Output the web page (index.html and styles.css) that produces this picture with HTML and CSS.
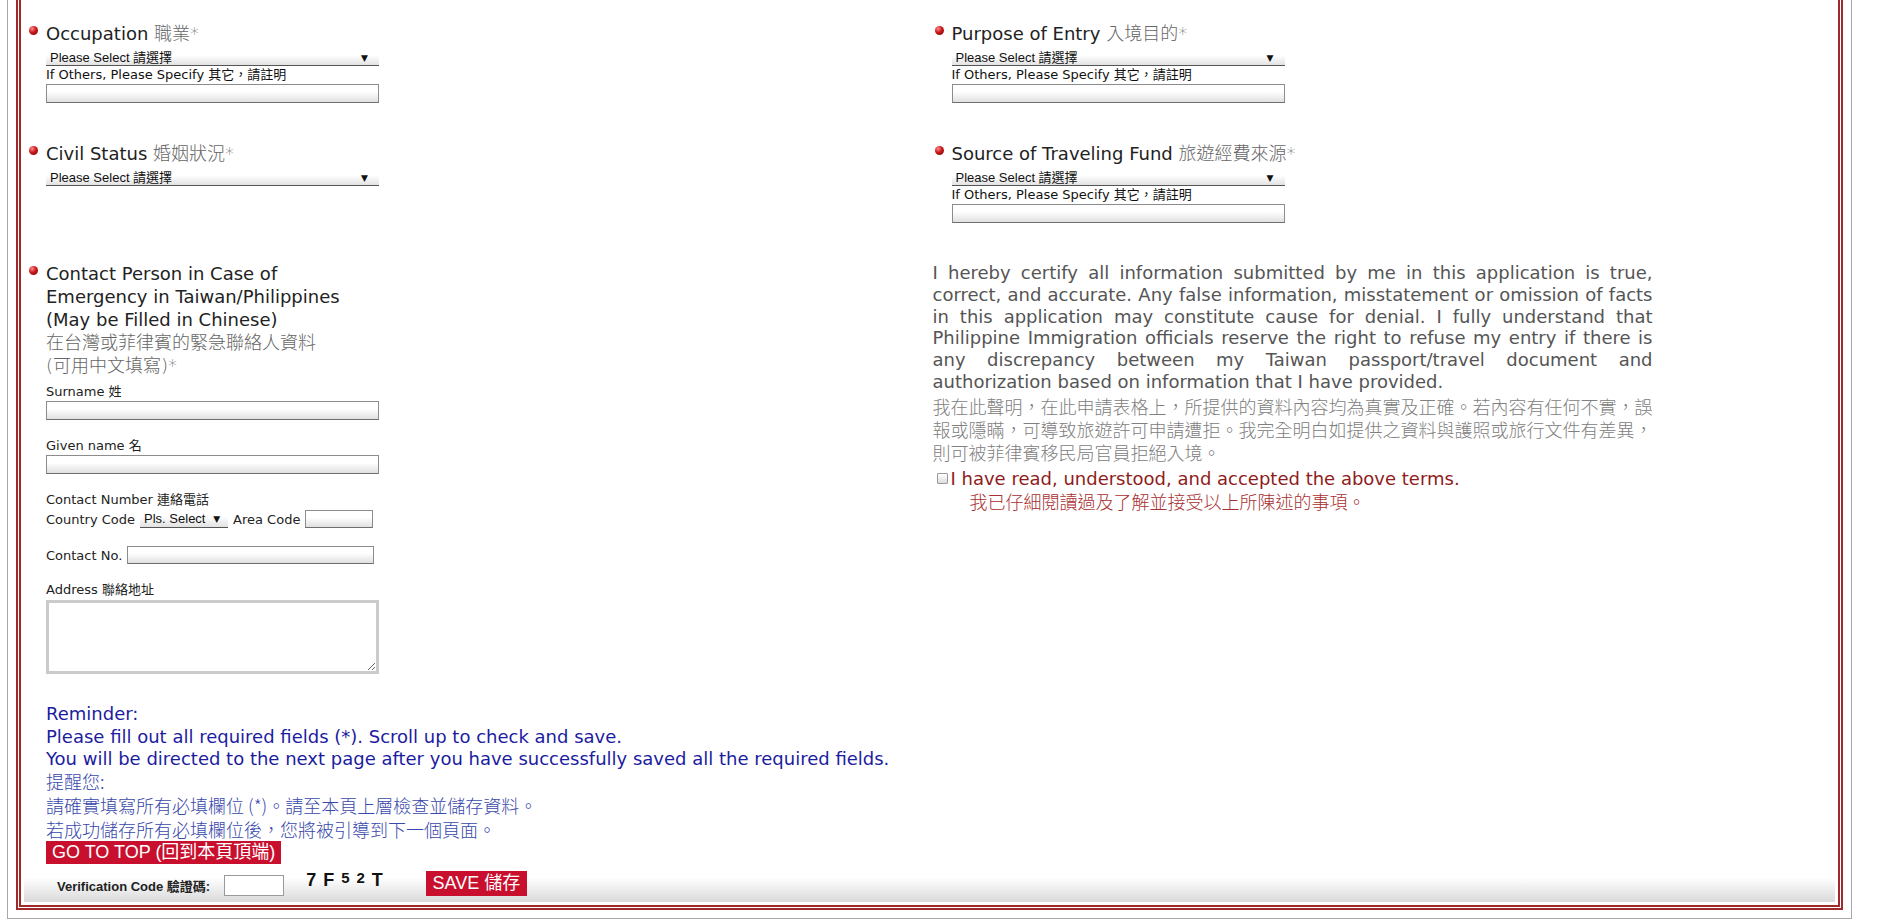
FILE: index.html
```html
<!DOCTYPE html>
<html lang="zh-Hant">
<head>
    <meta charset="UTF-8">
    <meta name="viewport" content="width=device-width, initial-scale=1.0">
    <title>Application Form</title>
    <link rel="stylesheet" href="styles.css">
</head>
<body>
<div class="page">
  <div class="frame">

    <div class="row">
      <div class="cell">
        <span class="dot"></span>
        <div class="field">
          <div class="label">Occupation <span class="zh">職業*</span></div>
          <div class="pick"><select><option>Please Select 請選擇</option></select></div>
          <div class="hint">If Others, Please Specify 其它，請註明</div>
          <input type="text" class="box">
        </div>
      </div>
      <div class="cell">
        <span class="dot"></span>
        <div class="field">
          <div class="label">Purpose of Entry <span class="zh">入境目的*</span></div>
          <div class="pick"><select><option>Please Select 請選擇</option></select></div>
          <div class="hint">If Others, Please Specify 其它，請註明</div>
          <input type="text" class="box">
        </div>
      </div>
    </div>

    <div class="row">
      <div class="cell">
        <span class="dot"></span>
        <div class="field">
          <div class="label">Civil Status <span class="zh">婚姻狀況*</span></div>
          <div class="pick"><select><option>Please Select 請選擇</option></select></div>
        </div>
      </div>
      <div class="cell">
        <span class="dot"></span>
        <div class="field">
          <div class="label">Source of Traveling Fund <span class="zh">旅遊經費來源*</span></div>
          <div class="pick"><select><option>Please Select 請選擇</option></select></div>
          <div class="hint">If Others, Please Specify 其它，請註明</div>
          <input type="text" class="box">
        </div>
      </div>
    </div>

    <div class="row row-last">
      <div class="cell">
        <span class="dot"></span>
        <div class="field">
          <div class="label wrap">Contact Person in Case of Emergency in Taiwan/Philippines (May be Filled in Chinese)<br><span class="zh">在台灣或菲律賓的緊急聯絡人資料<br>(可用中文填寫)*</span></div>

          <div class="group first">
            <div class="sub">Surname 姓</div>
            <input type="text" class="box">
          </div>
          <div class="group">
            <div class="sub">Given name 名</div>
            <input type="text" class="box">
          </div>
          <div class="group">
            <div class="sub">Contact Number 連絡電話</div>
            <div class="line">
              Country Code
              <div class="pick small"><select><option>Pls. Select</option></select></div>
              Area Code
              <input type="text" class="box area">
            </div>
          </div>
          <div class="group">
            <div class="line">
              Contact No.
              <input type="text" class="box phone">
            </div>
          </div>
          <div class="group">
            <div class="sub">Address 聯絡地址</div>
            <textarea class="addr"></textarea>
          </div>
        </div>
      </div>

      <div class="cell terms">
        <p class="certify">I hereby certify all information submitted by me in this application is true, correct, and accurate. Any false information, misstatement or omission of facts in this application may constitute cause for denial. I fully understand that Philippine Immigration officials reserve the right to refuse my entry if there is any discrepancy between my Taiwan passport/travel document and authorization based on information that I have provided.</p>
        <p class="certify-zh">我在此聲明，在此申請表格上，所提供的資料內容均為真實及正確。若內容有任何不實，誤報或隱瞞，可導致旅遊許可申請遭拒。我完全明白如提供之資料與護照或旅行文件有差異，則可被菲律賓移民局官員拒絕入境。</p>
        <label class="agree"><input type="checkbox" class="tick">I have read, understood, and accepted the above terms.</label>
        <div class="agree-zh">我已仔細閱讀過及了解並接受以上所陳述的事項。</div>
      </div>
    </div>

    <div class="reminder">
      <p class="note">Reminder:<br>Please fill out all required fields (*). Scroll up to check and save.<br>You will be directed to the next page after you have successfully saved all the required fields.</p>
      <p class="note-zh">提醒您:<br>請確實填寫所有必填欄位 (*)。請至本頁上層檢查並儲存資料。<br>若成功儲存所有必填欄位後，您將被引導到下一個頁面。</p>
      <button type="button" class="red-btn top-btn">GO TO TOP (回到本頁頂端)</button>
    </div>

    <div class="bar">
      <span class="vlabel">Verification Code 驗證碼:</span>
      <input type="text" class="vcode">
      <span class="captcha">7F<span class="up">52</span>T</span>
      <button type="button" class="red-btn save-btn">SAVE 儲存</button>
    </div>

  </div>
</div>
</body>
</html>
```

FILE: styles.css
```css
body {
    margin: 0;
    background: #fff;
    font-family: "DejaVu Sans", "Noto Sans CJK TC", sans-serif;
    color: #222;
}
.page {
    width: 1845px;
    margin-left: 7px;
    box-sizing: border-box;
    border: 1px solid #a8a8a8;
    border-top: none;
    padding: 0 8px 8px 8px;
}
.frame {
    border: 5px double #9e2a2b;
    border-top: none;
    padding: 22px 3px 3px 3px;
}
.row {
    display: grid;
    grid-template-columns: 1fr 1fr;
    padding-bottom: 39px;
}
.row-last {
    padding-bottom: 0;
}
.cell {
    display: flex;
    align-items: flex-start;
    gap: 8px;
    padding-left: 5px;
}
.dot {
    width: 9px;
    height: 9px;
    margin-top: 4px;
    border-radius: 50%;
    flex: none;
    background: radial-gradient(circle at 35% 30%, #ff8a8a, #c81818 45%, #7a0000 100%);
}
.label {
    font-size: 18px;
    line-height: 23px;
    color: #222;
    white-space: nowrap;
}
.label.wrap {
    width: 333px;
    white-space: normal;
}
.zh {
    color: #666;
    font-weight: 300;
}
.pick {
    position: relative;
    width: 333px;
    margin-top: 5px;
}
.pick select {
    appearance: none;
    -webkit-appearance: none;
    display: block;
    width: 100%;
    height: 16px;
    margin: 0;
    padding: 0 0 0 4px;
    border: 0;
    border-bottom: 1px solid #555;
    border-radius: 0;
    background: linear-gradient(#fff, #fff 35%, #e2e2e2);
    font: 13px "Liberation Sans", "Noto Sans CJK TC", sans-serif;
    color: #111;
}
.pick::after {
    content: "\25BC";
    position: absolute;
    right: 11px;
    top: 3px;
    font-size: 9px;
    color: #111;
    pointer-events: none;
}
.hint {
    font-size: 13px;
    line-height: 17px;
    color: #111;
}
.box {
    display: block;
    box-sizing: border-box;
    width: 333px;
    height: 19px;
    margin: 1px 0 0 0;
    border: 1px solid #8c8c8c;
    border-bottom-color: #6e6e6e;
    background: linear-gradient(#fff, #fff 40%, #e0e0e0);
    padding: 0 3px;
}
.group {
    margin-top: 18px;
}
.group.first {
    margin-top: 7px;
}
.sub {
    font-size: 13px;
    line-height: 16px;
    color: #222;
}
.line {
    display: flex;
    align-items: center;
    gap: 5px;
    height: 18px;
    margin-top: 2px;
    font-size: 13px;
    color: #222;
    white-space: nowrap;
}
.pick.small {
    width: 88px;
    margin-top: 0;
}
.pick.small select {
    height: 18px;
}
.pick.small::after {
    right: 8px;
    top: 4px;
}
.box.area {
    width: 68px;
    height: 18px;
    margin: 0;
}
.box.phone {
    width: 247px;
    height: 18px;
    margin: 0;
}
.addr {
    display: block;
    box-sizing: border-box;
    width: 333px;
    height: 74px;
    margin-top: 2px;
    border: 3px solid #cbcbcb;
    background: #fff;
}
.cell.terms {
    display: block;
    padding-left: 3px;
}
.certify {
    width: 720px;
    margin: 0;
    font-size: 18px;
    line-height: 21.8px;
    text-align: justify;
    color: #555;
}
.certify-zh {
    width: 722px;
    margin: 2px 0 0 0;
    font-family: "Noto Sans CJK TC", sans-serif;
    font-weight: 300;
    font-size: 18px;
    line-height: 23px;
    color: #808080;
}
.agree {
    display: flex;
    align-items: center;
    gap: 3px;
    margin-top: 4px;
    height: 22px;
    font-size: 18px;
    color: #8e1c1c;
}
.tick {
    appearance: none;
    -webkit-appearance: none;
    width: 11px;
    height: 11px;
    margin: 0 0 0 4px;
    border: 1px solid #9a9a9a;
    border-radius: 1px;
    background: linear-gradient(#fff, #ddd);
}
.agree-zh {
    padding-left: 37px;
    font-family: "Noto Sans CJK TC", sans-serif;
    font-weight: 300;
    font-size: 18px;
    line-height: 22px;
    color: #a83030;
}
.reminder {
    margin-top: 29px;
    padding-left: 22px;
}
.note {
    margin: 0;
    font-size: 18px;
    line-height: 22.5px;
    color: #1c1ca0;
}
.note-zh {
    margin: -2px 0 0 0;
    font-family: "Noto Sans CJK TC", sans-serif;
    font-weight: 300;
    font-size: 18px;
    line-height: 24px;
    color: #3848ac;
}
.red-btn {
    border: none;
    border-radius: 0;
    background: #c8102e;
    color: #fff;
    font-family: "Liberation Sans", "Noto Sans CJK TC", sans-serif;
    font-size: 18px;
    cursor: pointer;
}
.top-btn {
    display: block;
    height: 23px;
    line-height: 23px;
    margin-top: 0;
    padding: 0 6px;
}
.bar {
    display: flex;
    align-items: center;
    height: 33px;
    margin-top: 5px;
    padding-left: 33px;
    background: linear-gradient(#fff, #fff 25%, #dadada);
}
.vlabel {
    font-family: "Liberation Sans", "Noto Sans CJK TC", sans-serif;
    font-size: 13px;
    font-weight: bold;
    color: #222;
}
.vcode {
    box-sizing: border-box;
    width: 60px;
    height: 21px;
    margin-left: 14px;
    border: 1px solid #999;
    background: #fff;
}
.captcha {
    align-self: flex-start;
    margin-left: 22px;
    font-family: "Liberation Sans", sans-serif;
    font-weight: bold;
    font-size: 18px;
    letter-spacing: 7px;
    color: #111;
}
.captcha .up {
    font-size: 15px;
    vertical-align: 3px;
}
.save-btn {
    width: 101px;
    height: 25px;
    line-height: 25px;
    margin-left: 36px;
    margin-top: -3px;
    padding: 0;
}
```
